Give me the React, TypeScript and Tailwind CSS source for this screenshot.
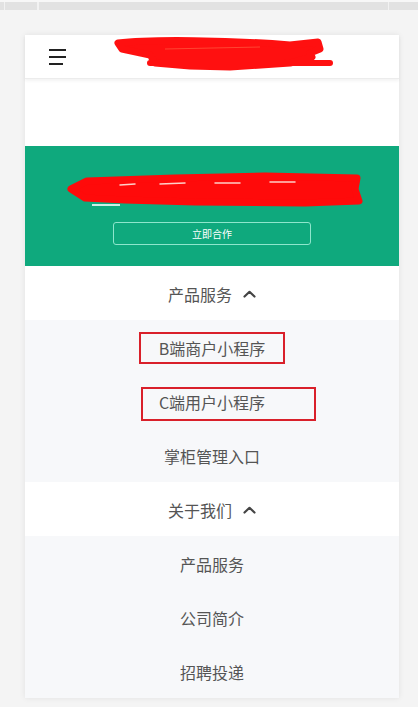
import React from "react";

const font = { fontFamily: '"Noto Sans CJK SC", "Noto Sans", sans-serif' };

function Chevron() {
  return (
    <svg width="13" height="8" viewBox="0 0 13 8" className="ml-[11px]">
      <path d="M1.5 6.5 L6.5 1.8 L11.5 6.5" fill="none" stroke="#444" strokeWidth="2.2" strokeLinecap="round" strokeLinejoin="round" />
    </svg>
  );
}

function GroupHeader({ label }: { label: string }) {
  return (
    <div className="h-[54px] pt-[2px] flex items-center justify-center bg-white text-[16px] text-[#555]">
      <span>{label}</span>
      <Chevron />
    </div>
  );
}

function Item({ children }: { children: React.ReactNode }) {
  return (
    <div className="h-[54px] pt-[1px] flex items-center justify-center text-[16px] text-[#555]">
      {children}
    </div>
  );
}

export default function App() {
  return (
    <div className="w-full h-[707px] overflow-hidden bg-[#f4f4f4]" style={font}>
      <div className="pt-[2px] bg-[#f7f7f7]">
        <div className="h-[8px] bg-[#e2e2e2] flex items-stretch">
          <div className="ml-[4px] w-[1px] bg-[#f2f2f2]" />
          <div className="ml-[32px] w-[2px] bg-[#f2f2f2]" />
          <div className="ml-[349px] w-[1px] bg-[#f2f2f2]" />
        </div>
      </div>
      <div className="ml-[25px] mt-[25px] w-[374px] bg-white shadow-[0_0_6px_rgba(0,0,0,0.08)]">
        <div className="relative h-[44px] flex items-center pl-[24px] border-b border-[#ececec] shadow-[0_2px_3px_rgba(0,0,0,0.05)]">
          <div className="flex flex-col gap-[5px]">
            <div className="w-[17px] h-[2px] bg-[#222]" />
            <div className="w-[17px] h-[2px] bg-[#222]" />
            <div className="w-[14px] h-[2px] bg-[#222]" />
          </div>
          <svg className="absolute left-[85px] top-[0px]" width="230" height="40" viewBox="0 0 230 40">
            <path d="M8 8 C40 4 120 5 180 10 L208 7 L210 14 L200 18 L202 22 L180 28 L120 32 L80 31 L45 28 L40 20 L12 14 Z" fill="#ff1010" stroke="#ff1010" strokeWidth="7" strokeLinejoin="round" />
            <path d="M40 28 L220 28" stroke="#ff1010" strokeWidth="6" strokeLinecap="round" />
            <path d="M55 14 L150 12" stroke="#ff6a4a" strokeWidth="1" opacity="0.6" />
          </svg>
        </div>
        <div className="h-[67px]" />
        <div className="relative h-[120px] bg-[#0fa97d] flex flex-col items-center justify-end pb-[21px]">
          <svg className="absolute left-[40px] top-[25px]" width="300" height="38" viewBox="0 0 300 38">
            <path d="M6 18 L22 10 L110 7 L200 5 L292 7 L290 18 L294 30 L240 32 L130 31 L60 29 L20 27 Z" fill="#ff0a0a" stroke="#ff0a0a" strokeWidth="7" strokeLinejoin="round" />
            <path d="M55 14 L70 13 M95 13 L120 12 M150 12 L175 12 M205 11 L230 11" stroke="#ffd0c8" strokeWidth="1.5" strokeLinecap="round" />
            <path d="M27 34 L55 34" stroke="#ffffff" strokeWidth="2" opacity="0.8" />
          </svg>
          <div className="w-[198px] h-[23px] rounded-[3px] border border-[#8ee6cc] flex items-center justify-center text-[10px] text-white">
            立即合作
          </div>
        </div>
        <GroupHeader label="产品服务" />
        <div className="bg-[#f7f8fa]">
          <Item>
            <span className="relative">
              B端商户小程序
              <span className="absolute left-[-20px] right-[-20px] top-[-4px] bottom-[-4px] border-2 border-[#d9202a]" />
            </span>
          </Item>
          <Item>
            <span className="relative">
              C端用户小程序
              <span className="absolute left-[-18px] right-[-51px] top-[-3px] bottom-[-7px] border-2 border-[#d9202a]" />
            </span>
          </Item>
          <Item>掌柜管理入口</Item>
        </div>
        <GroupHeader label="关于我们" />
        <div className="bg-[#f7f8fa]">
          <Item>产品服务</Item>
          <Item>公司简介</Item>
          <Item>招聘投递</Item>
        </div>
      </div>
    </div>
  );
}
